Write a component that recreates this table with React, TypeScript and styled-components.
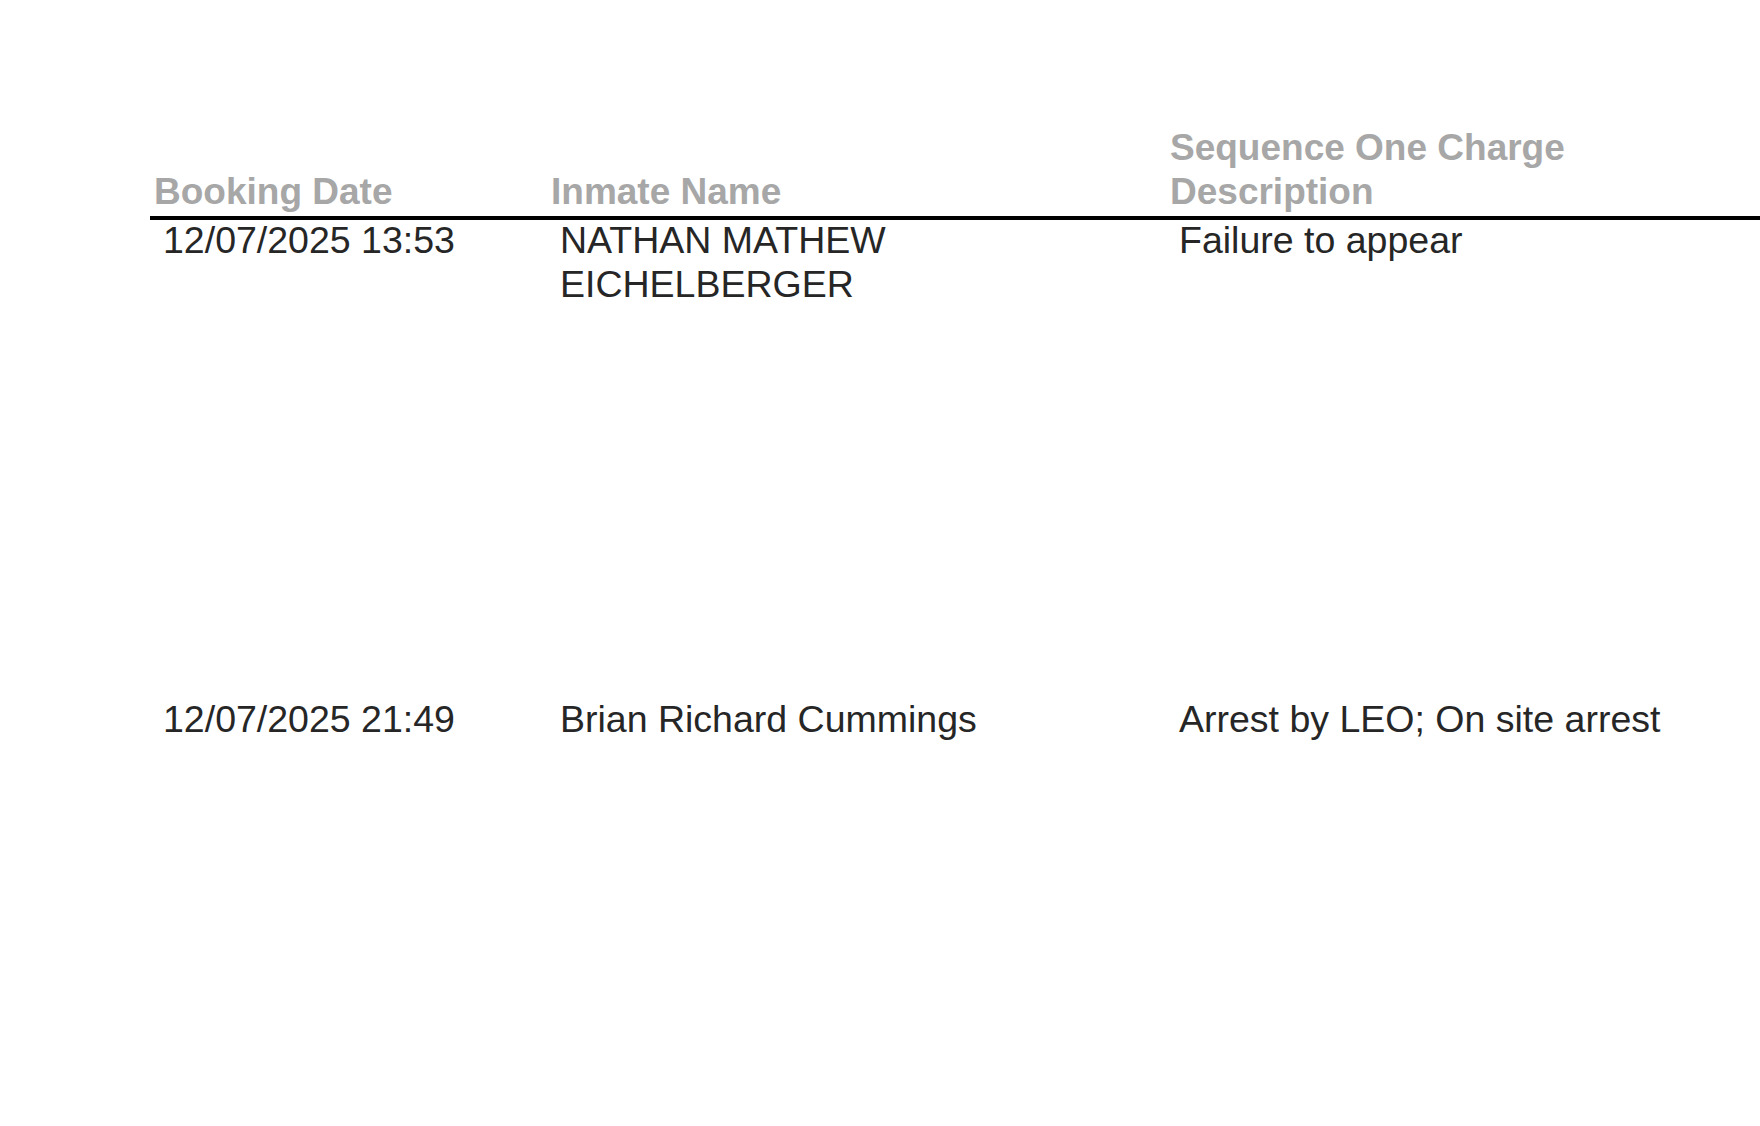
import React from 'react';
import styled, { createGlobalStyle } from 'styled-components';

const GlobalStyle = createGlobalStyle`
  html, body {
    margin: 0;
    padding: 0;
    background: #ffffff;
    overflow: hidden;
  }

  body {
    font-family: 'Liberation Sans', Arial, sans-serif;
  }
`;

const Page = styled.div`
  padding: 126px 0 0 150px;
  min-height: 100vh;
  box-sizing: border-box;
`;

const columns = '397px 619px 1fr';

const HeaderRow = styled.div`
  display: grid;
  grid-template-columns: ${columns};
  align-items: end;
  padding-bottom: 2px;
  border-bottom: 4px solid #000000;
`;

const HeaderCell = styled.div`
  padding: 0 24px 0 4px;
  font-size: 37px;
  line-height: 44px;
  font-weight: 700;
  color: #a7a7a7;
`;

const Body = styled.div`
  margin-top: -2px;
`;

const DataRow = styled.div`
  display: grid;
  grid-template-columns: ${columns};
  align-items: start;
  height: 479px;
`;

const Cell = styled.div`
  padding: 0 24px 0 13px;
  font-size: 37.5px;
  line-height: 44px;
  color: #262626;
`;

interface Booking {
  date: string;
  name: string;
  charge: string;
}

const bookings: Booking[] = [
  {
    date: '12/07/2025 13:53',
    name: 'NATHAN MATHEW EICHELBERGER',
    charge: 'Failure to appear',
  },
  {
    date: '12/07/2025 21:49',
    name: 'Brian Richard Cummings',
    charge: 'Arrest by LEO; On site arrest',
  },
];

export default function App() {
  return (
    <>
      <GlobalStyle />
      <Page>
        <HeaderRow>
          <HeaderCell>Booking Date</HeaderCell>
          <HeaderCell>Inmate Name</HeaderCell>
          <HeaderCell>Sequence One Charge Description</HeaderCell>
        </HeaderRow>
        <Body>
          {bookings.map((b) => (
            <DataRow key={b.date}>
              <Cell>{b.date}</Cell>
              <Cell>{b.name}</Cell>
              <Cell>{b.charge}</Cell>
            </DataRow>
          ))}
        </Body>
      </Page>
    </>
  );
}
